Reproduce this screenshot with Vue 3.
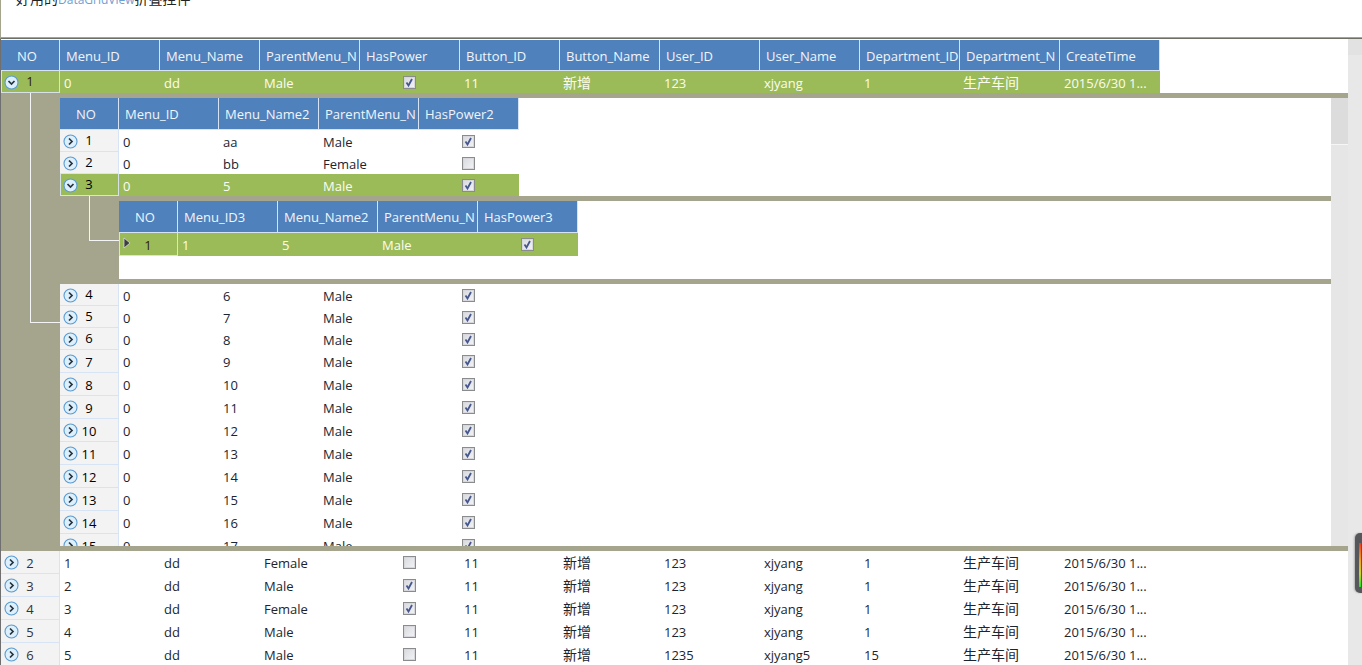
<script setup>
const masterHead = ["Menu_ID", "Menu_Name", "ParentMenu_N", "HasPower", "Button_ID", "Button_Name", "User_ID", "User_Name", "Department_ID", "Department_N", "CreateTime"];
const secondHead = ["Menu_ID", "Menu_Name2", "ParentMenu_N", "HasPower2"];
const thirdHead = ["Menu_ID3", "Menu_Name2", "ParentMenu_N", "HasPower3"];

const date = "2015/6/30 1...";
const dept = "生产车间";

const master = (id, gender, power, user = "123", name = "xjyang", depId = "1") => [
  id, "dd", gender, power, "11", "新增", user, name, depId, dept, date,
];

const openRow = master("0", "Male", true);

const lowerRows = [
  { no: 2, cells: master("1", "Female", false) },
  { no: 3, cells: master("2", "Male", true) },
  { no: 4, cells: master("3", "Female", true) },
  { no: 5, cells: master("4", "Male", false) },
  { no: 6, cells: master("5", "Male", false, "1235", "xjyang5", "15") },
];

const upperSecond = [
  { no: 1, cells: ["0", "aa", "Male", true] },
  { no: 2, cells: ["0", "bb", "Female", false] },
];
const openSecond = ["0", "5", "Male", true];
const thirdRow = ["1", "5", "Male", true];

const lowerSecond = [];
for (let no = 4; no <= 15; no++) {
  lowerSecond.push({ no, tall: no > 6, cells: ["0", String(no + 2), "Male", true] });
}

const cellClass = (v) => ({
  center: v === true || v === false,
  cjk: v === dept || v === "新增",
});
</script>

<template>
  <div class="page">
    <div class="topbar">
      <p class="title">好用的<span class="accent">DataGridView</span>折叠控件</p>
    </div>

    <div class="main">
      <div class="grid">
        <div class="head-row">
          <div class="head-no">NO</div>
          <div v-for="h in masterHead" :key="h" class="head-cell">{{ h }}</div>
        </div>

        <div class="row selected">
          <div class="row-head">
            <svg class="toggle" viewBox="0 0 15 15">
              <circle cx="7.5" cy="7.5" r="6.5" class="toggle-ring" />
              <path d="M4.5 6l3 3 3-3" class="toggle-mark" />
            </svg>
            <span class="num dim">1</span>
          </div>
          <div v-for="(v, i) in openRow" :key="i" class="cell" :class="cellClass(v)">
            <span v-if="v === true || v === false" class="check">
              <svg v-if="v" viewBox="0 0 11 11"><path d="M2.5 5.5l2 3 3.5-6.5" /></svg>
            </span>
            <template v-else>{{ v }}</template>
          </div>
        </div>

        <div class="band"></div>
        <div class="detail">
          <div class="gutter">
            <div class="link link-first"></div>
          </div>
          <div class="scroll-view">
            <div class="second">
              <div class="head-row nested">
                <div class="head-no">NO</div>
                <div v-for="h in secondHead" :key="h" class="head-cell">{{ h }}</div>
              </div>

              <div v-for="r in upperSecond" :key="r.no" class="row">
                <div class="row-head">
                  <svg class="toggle" viewBox="0 0 15 15">
                    <circle cx="7.5" cy="7.5" r="6.5" class="toggle-ring" />
                    <path d="M6 4.5l3 3-3 3" class="toggle-mark" />
                  </svg>
                  <span class="num">{{ r.no }}</span>
                </div>
                <div v-for="(v, i) in r.cells" :key="i" class="cell" :class="cellClass(v)">
                  <span v-if="v === true || v === false" class="check">
                    <svg v-if="v" viewBox="0 0 11 11"><path d="M2.5 5.5l2 3 3.5-6.5" /></svg>
                  </span>
                  <template v-else>{{ v }}</template>
                </div>
              </div>

              <div class="row selected">
                <div class="row-head">
                  <svg class="toggle" viewBox="0 0 15 15">
                    <circle cx="7.5" cy="7.5" r="6.5" class="toggle-ring" />
                    <path d="M4.5 6l3 3 3-3" class="toggle-mark" />
                  </svg>
                  <span class="num">3</span>
                </div>
                <div v-for="(v, i) in openSecond" :key="i" class="cell" :class="cellClass(v)">
                  <span v-if="v === true || v === false" class="check">
                    <svg v-if="v" viewBox="0 0 11 11"><path d="M2.5 5.5l2 3 3.5-6.5" /></svg>
                  </span>
                  <template v-else>{{ v }}</template>
                </div>
              </div>

              <div class="band"></div>
              <div class="detail third-detail">
                <div class="gutter">
                  <div class="link link-second"></div>
                </div>
                <div class="third">
                  <div class="head-row nested">
                    <div class="head-no">NO</div>
                    <div v-for="h in thirdHead" :key="h" class="head-cell">{{ h }}</div>
                  </div>
                  <div class="row selected tall">
                    <div class="row-head">
                      <svg class="arrow" viewBox="0 0 8 12"><path d="M1 1l6 5-6 5z" /></svg>
                      <span class="num dim">1</span>
                    </div>
                    <div v-for="(v, i) in thirdRow" :key="i" class="cell" :class="cellClass(v)">
                      <span v-if="v === true || v === false" class="check">
                        <svg v-if="v" viewBox="0 0 11 11"><path d="M2.5 5.5l2 3 3.5-6.5" /></svg>
                      </span>
                      <template v-else>{{ v }}</template>
                    </div>
                  </div>
                </div>
              </div>
              <div class="band"></div>

              <div v-for="r in lowerSecond" :key="r.no" class="row" :class="{ tall: r.tall }">
                <div class="row-head">
                  <svg class="toggle" viewBox="0 0 15 15">
                    <circle cx="7.5" cy="7.5" r="6.5" class="toggle-ring" />
                    <path d="M6 4.5l3 3-3 3" class="toggle-mark" />
                  </svg>
                  <span class="num">{{ r.no }}</span>
                </div>
                <div v-for="(v, i) in r.cells" :key="i" class="cell" :class="cellClass(v)">
                  <span v-if="v === true || v === false" class="check">
                    <svg v-if="v" viewBox="0 0 11 11"><path d="M2.5 5.5l2 3 3.5-6.5" /></svg>
                  </span>
                  <template v-else>{{ v }}</template>
                </div>
              </div>
            </div>

            <div class="inner-bar">
              <div class="inner-thumb"></div>
            </div>
          </div>
        </div>
        <div class="band"></div>

        <div v-for="r in lowerRows" :key="r.no" class="row tall">
          <div class="row-head">
            <svg class="toggle" viewBox="0 0 15 15">
              <circle cx="7.5" cy="7.5" r="6.5" class="toggle-ring" />
              <path d="M6 4.5l3 3-3 3" class="toggle-mark" />
            </svg>
            <span class="num dim">{{ r.no }}</span>
          </div>
          <div v-for="(v, i) in r.cells" :key="i" class="cell" :class="cellClass(v)">
            <span v-if="v === true || v === false" class="check">
              <svg v-if="v" viewBox="0 0 11 11"><path d="M2.5 5.5l2 3 3.5-6.5" /></svg>
            </span>
            <template v-else>{{ v }}</template>
          </div>
        </div>
      </div>

      <div class="outer-bar">
        <div class="outer-cap"></div>
      </div>
    </div>

    <div class="meter"><div class="meter-fill"></div></div>
  </div>
</template>

<style scoped>
.page {
  position: relative;
  height: 665px;
  overflow: hidden;
  background: #fff;
  font-family: "Open Sans", "Noto Sans CJK SC", sans-serif;
  font-size: 13px;
  color: #1b2530;
}

.topbar {
  height: 39px;
  box-sizing: border-box;
  overflow: hidden;
  border-left: 1px solid #a5a58d;
  border-bottom: 1px solid #6f6f66;
  box-shadow: inset 0 -1px 0 #a5a58d;
  padding-left: 15px;
}

.title {
  margin: -10px 0 0;
  font-size: 14px;
  line-height: 18px;
  color: #222;
}

.accent {
  font-size: 12px;
  color: #6fa0d2;
}

.main {
  display: flex;
  height: 626px;
}

.grid {
  width: 1347px;
  padding-top: 1px;
  border-left: 1px solid #6f6f6f;
  overflow: hidden;
}

.head-row {
  display: flex;
  height: 31px;
}

.head-row.nested {
  height: 32px;
}

.head-no,
.head-cell {
  flex: none;
  box-sizing: border-box;
  background: #4f81bd;
  border-right: 1px solid #d5e3f2;
  border-bottom: 1px solid #d5e3f2;
  color: #f1f5fa;
  line-height: 33px;
  overflow: hidden;
  white-space: nowrap;
}

.head-no {
  width: 59px;
  padding-right: 6px;
  text-align: center;
}

.head-cell {
  width: 100px;
  padding-left: 6px;
}

.row {
  display: flex;
  height: 22px;
}

.row.tall {
  height: 23px;
}

.row-head {
  flex: none;
  box-sizing: border-box;
  width: 59px;
  display: grid;
  grid-template-columns: 1fr auto 1fr;
  align-items: center;
  background: #f3f3f3;
  border-right: 1px solid #d6e4f5;
  border-bottom: 1px solid #d6e4f5;
  padding-left: 3px;
}

.num {
  grid-column: 2;
  grid-row: 1;
  margin-left: -3px;
  margin-top: -2px;
  color: #000;
}

.tall .num {
  margin-top: 2px;
}

.num.dim {
  color: #333;
}

.selected .num.dim {
  color: #2a1c10;
}

.toggle {
  grid-column: 1;
  grid-row: 1;
  width: 15px;
  height: 15px;
  margin-top: 1px;
}

.toggle-ring {
  fill: #dceffc;
  stroke: #5b9bd0;
  stroke-width: 1.1;
}

.toggle-mark {
  fill: none;
  stroke: #26323c;
  stroke-width: 1.7;
}

.arrow {
  grid-column: 1;
  grid-row: 1;
  width: 8px;
  height: 12px;
  margin: -2px 0 0 1px;
}

.arrow path {
  fill: #3d3d3d;
  stroke: #e8e8e8;
  stroke-width: 0.7;
}

.cell {
  flex: none;
  box-sizing: border-box;
  width: 100px;
  padding-left: 4px;
  overflow: hidden;
  white-space: nowrap;
  line-height: 25px;
}

.cell.cjk {
  font-size: 14px;
  line-height: 23px;
  padding-left: 3px;
}

.cell.center {
  display: flex;
  justify-content: center;
  align-items: center;
  padding-left: 0;
  padding-right: 1px;
}

.check {
  box-sizing: border-box;
  width: 13px;
  height: 13px;
  display: block;
  border: 1px solid #8a8b8c;
  background: linear-gradient(135deg, #d6d9de, #f4f4f6);
  box-shadow: inset 0 0 0 1px #d8d8dc;
}

.check svg {
  display: block;
  width: 11px;
  height: 11px;
}

.check path {
  fill: none;
  stroke: #46568f;
  stroke-width: 1.8;
}

.selected .cell,
.selected .row-head {
  background: #9bbb59;
}

.selected .cell {
  color: #fbfdf0;
}

.selected .row-head {
  border-color: #d7e2e6;
  box-shadow: inset 1px 0 0 #d7e2e6;
}

.selected {
  width: max-content;
}

.band {
  height: 5px;
  background: #a5a58d;
}

.detail {
  display: flex;
  height: 448px;
}

.gutter {
  flex: none;
  box-sizing: border-box;
  width: 59px;
  background: #a5a58d;
  padding-left: 29px;
}

.link {
  box-sizing: border-box;
  width: 30px;
  margin-top: -5px;
  border-left: 1px solid #f4f4f4;
  border-bottom: 1px solid #f4f4f4;
}

.link-first {
  height: 230px;
}

.link-second {
  height: 45px;
}

.scroll-view {
  flex: 1;
  display: flex;
  min-width: 0;
  overflow: hidden;
}

.second {
  width: 1271px;
  flex: none;
}

.third-detail {
  height: 78px;
}

.third {
  flex: 1;
  background: #fff;
}

.inner-bar {
  width: 17px;
  flex: none;
  background: #e6e6e6;
}

.inner-thumb {
  height: 46px;
  background: #dcdcdc;
  border-bottom: 1px solid #f6f6f6;
}

.outer-bar {
  flex: none;
  width: 14px;
  background: #e8e8e8;
}

.outer-cap {
  height: 16px;
  background: #e2e2e2;
}

.meter {
  position: absolute;
  left: 1355px;
  top: 533px;
  width: 12px;
  height: 60px;
  border-radius: 5px;
  background: #55575a;
  box-shadow: -1px 0 2px rgba(0, 0, 0, 0.25);
}

.meter-fill {
  width: 2px;
  height: 44px;
  margin: 10px 0 0 4px;
  background: linear-gradient(#f33a1f, #f6a21c 40%, #c9d91e 70%, #19e81f);
}
</style>

<style>
html,
body {
  margin: 0;
  overflow: hidden;
  background: #fff;
}
</style>
